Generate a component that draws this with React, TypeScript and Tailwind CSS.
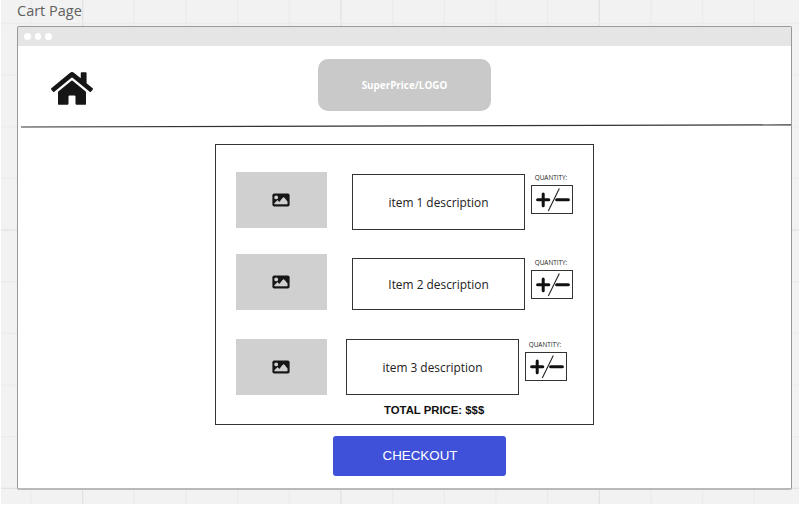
import { FaHome } from "react-icons/fa";

const SANS = "font-['Open_Sans','Noto_Sans',sans-serif]";

function Grid() {
  const xs = Array.from({ length: 15 }, (_, i) => 31 + i * 51.66);
  const ys = Array.from({ length: 10 }, (_, i) => 23.5 + i * 51.65);
  return (
    <svg className="absolute inset-0" width="800" height="505">
      <rect x="1" y="0" width="798" height="504" fill="#f2f2f2" />
      {xs.map((x, i) => (
        <line key={x} x1={x} x2={x} y1="0" y2="504" stroke={i % 5 === 1 ? "#e2e2e2" : "#ebebeb"} strokeWidth="1.3" />
      ))}
      {ys.map((y, i) => (
        <line key={y} x1="1" x2="799" y1={y} y2={y} stroke={i % 5 === 4 ? "#e2e2e2" : "#ebebeb"} strokeWidth="1.3" />
      ))}
    </svg>
  );
}

function Picture() {
  return (
    <div className="flex h-14 w-[91px] items-center justify-center bg-[#d0d0d0]">
      <svg className="-ml-px" width="18" height="14" viewBox="0 0 18 14">
        <rect x="0.4" y="0.5" width="17.2" height="13" rx="1.8" fill="#161616" />
        <circle cx="4.2" cy="4.4" r="1.9" fill="#d0d0d0" />
        <path
          d="M2.7 11V10.2L5 7.8Q5.4 7.4 5.8 7.8L7.4 9.2L10.8 5Q11.6 4.2 12.4 4.9L15.2 8.6V11Z"
          fill="#d0d0d0"
          stroke="#d0d0d0"
          strokeWidth="0.6"
          strokeLinejoin="round"
        />
      </svg>
    </div>
  );
}

function Quantity() {
  return (
    <div className={`flex w-[42px] flex-col items-center ${SANS}`}>
      <span className="-ml-[2px] h-[12px] text-[6.4px] leading-[10px] whitespace-nowrap text-[#222]">QUANTITY:</span>
      <div className="h-[29px] w-[42px] border border-[#333] bg-white">
        <svg width="40" height="27" viewBox="0 0 40 27">
          <path d="M5.6 13.8H16.8M11.2 8V19.8M24.6 13.8H36.4" stroke="#111" strokeWidth="3" strokeLinecap="round" />
          <path d="M16.3 25L27.3 2.5" stroke="#222" strokeWidth="1.1" />
        </svg>
      </div>
    </div>
  );
}

type RowProps = { text: string; row: string; gap: string; box: string; qty: string };

function Row({ text, row, gap, box, qty }: RowProps) {
  return (
    <div className={`flex items-start ${row}`}>
      <Picture />
      <div
        className={`flex w-[173px] items-center justify-center border border-[#333] pt-px text-[11.9px] text-[#222] ${SANS} ${gap} ${box}`}
      >
        {text}
      </div>
      <div className={`ml-[6px] ${qty}`}>
        <Quantity />
      </div>
    </div>
  );
}

export default function App() {
  return (
    <div className="relative h-[505px] w-[800px] overflow-hidden bg-white">
      <Grid />
      <div className="relative flex flex-col">
        <h1 className={`h-[26px] pl-[17px] text-[14.5px] leading-[22px] text-[#606060] ${SANS}`}>Cart Page</h1>
        <main className="ml-[17px] flex h-[464px] w-[775px] flex-col rounded-[2px] border border-b-2 border-[#999] border-b-[#b9b9b9] bg-white">
          <div className="flex h-[19px] shrink-0 items-center gap-1 bg-[#e5e5e5] pl-[6px]">
            <i className="size-[6.5px] rounded-full bg-white" />
            <i className="size-[6.5px] rounded-full bg-white" />
            <i className="size-[6.5px] rounded-full bg-white" />
          </div>
          <header className="flex h-[78px] shrink-0 items-start">
            <FaHome className="mt-[19px] ml-[33px] h-[47px] w-[42px] text-[#161616]" />
            <div
              className={`mt-[13px] ml-[225px] flex h-[52px] w-[173px] items-center justify-center rounded-[10px] bg-[#c9c9c9] pt-px text-[9.9px] font-bold text-white ${SANS}`}
            >
              SuperPrice/LOGO
            </div>
          </header>
          <svg className="ml-[3px] h-1 w-[770px] shrink-0" viewBox="0 0 770 4">
            <path d="M0 3L770 0.9" stroke="#333" strokeWidth="1.2" />
          </svg>
          <section className="mt-4 ml-[197px] flex h-[281px] w-[379px] shrink-0 flex-col border border-[#333] pl-[20px]">
            <Row text="item 1 description" row="mt-[27px] h-[82px]" gap="ml-[25px]" box="mt-[2px] h-[56px]" qty="mt-[1px]" />
            <Row text="Item 2 description" row="h-[85px]" gap="ml-[25px]" box="mt-[4px] h-[52px]" qty="mt-[4px]" />
            <Row text="item 3 description" row="h-[64px]" gap="ml-[19px]" box="h-[56px]" qty="mt-[1px]" />
            <p className="ml-[148px] font-['Liberation_Sans',Arial,sans-serif] text-[11.35px] leading-[14px] font-bold whitespace-nowrap text-[#111]">
              TOTAL PRICE: $$$
            </p>
          </section>
          <button className="mt-[11px] ml-[315px] h-10 w-[173px] shrink-0 rounded-[3px] bg-[#3f51d9] pl-px font-['Liberation_Sans',Arial,sans-serif] text-[13.35px] text-white">
            CHECKOUT
          </button>
        </main>
      </div>
    </div>
  );
}
